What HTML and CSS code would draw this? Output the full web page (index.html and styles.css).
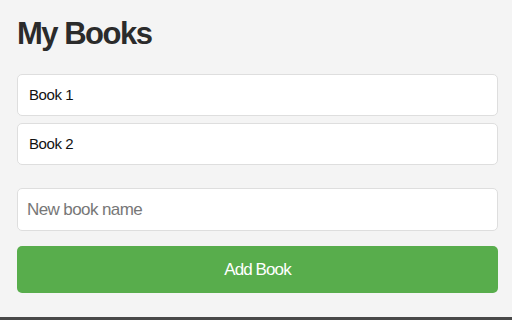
FILE: index.html
```html
<!DOCTYPE html>
<html lang="en">
<head>
    <meta charset="UTF-8">
    <meta name="viewport" content="width=device-width, initial-scale=1.0">
    <title>My Books</title>
    <link rel="stylesheet" href="styles.css">
</head>
<body>

    <div class="container">
        <h1>My Books</h1>

        <!-- Book List -->
        <ul class="book-list">
            <li class="book-item">Book 1</li>
            <li class="book-item">Book 2</li>
        </ul>

        <!-- Add Book Form -->
        <form class="add-form" onsubmit="return false;">
            <input type="text" class="book-input" placeholder="New book name">
            <button type="submit" class="add-btn">Add Book</button>
        </form>
    </div>

</body>
</html>
```

FILE: styles.css
```css
html, body {
    height: 100%;
}

body {
    font-family: 'Liberation Sans', Arial, sans-serif;
    background-color: #f4f4f4;
    color: #111;
    margin: 0;
    box-sizing: border-box;
    border-bottom: 3px solid #484848;
}

.container {
    padding: 18px 14px 0 17px;
}

h1 {
    font-size: 31px;
    line-height: 32px;
    letter-spacing: -1.5px;
    color: #2b2b2b;
    margin: 0 0 24px 0;
}

.book-list {
    list-style: none;
    margin: 0;
    padding: 0;
    display: flex;
    flex-direction: column;
    gap: 7px;
}

.book-item {
    background-color: #fff;
    border: 1px solid #dedede;
    border-radius: 5px;
    padding: 10px 11px;
    font-size: 15px;
    line-height: 20px;
    letter-spacing: -0.4px;
}

.add-form {
    margin-top: 23px;
    display: flex;
    flex-direction: column;
    gap: 15px;
}

.book-input {
    box-sizing: border-box;
    height: 43px;
    padding: 0 9px;
    font-family: inherit;
    font-size: 17px;
    letter-spacing: -0.6px;
    background-color: #fff;
    border: 1px solid #dedede;
    border-radius: 5px;
    outline: none;
}

.book-input::placeholder {
    color: #777;
}

.add-btn {
    height: 47px;
    background-color: #58ad4c;
    color: #fff;
    font-family: inherit;
    font-size: 17px;
    letter-spacing: -0.9px;
    border: none;
    border-radius: 5px;
    cursor: pointer;
}

.add-btn:hover {
    background-color: #4a9a3f;
}
```
